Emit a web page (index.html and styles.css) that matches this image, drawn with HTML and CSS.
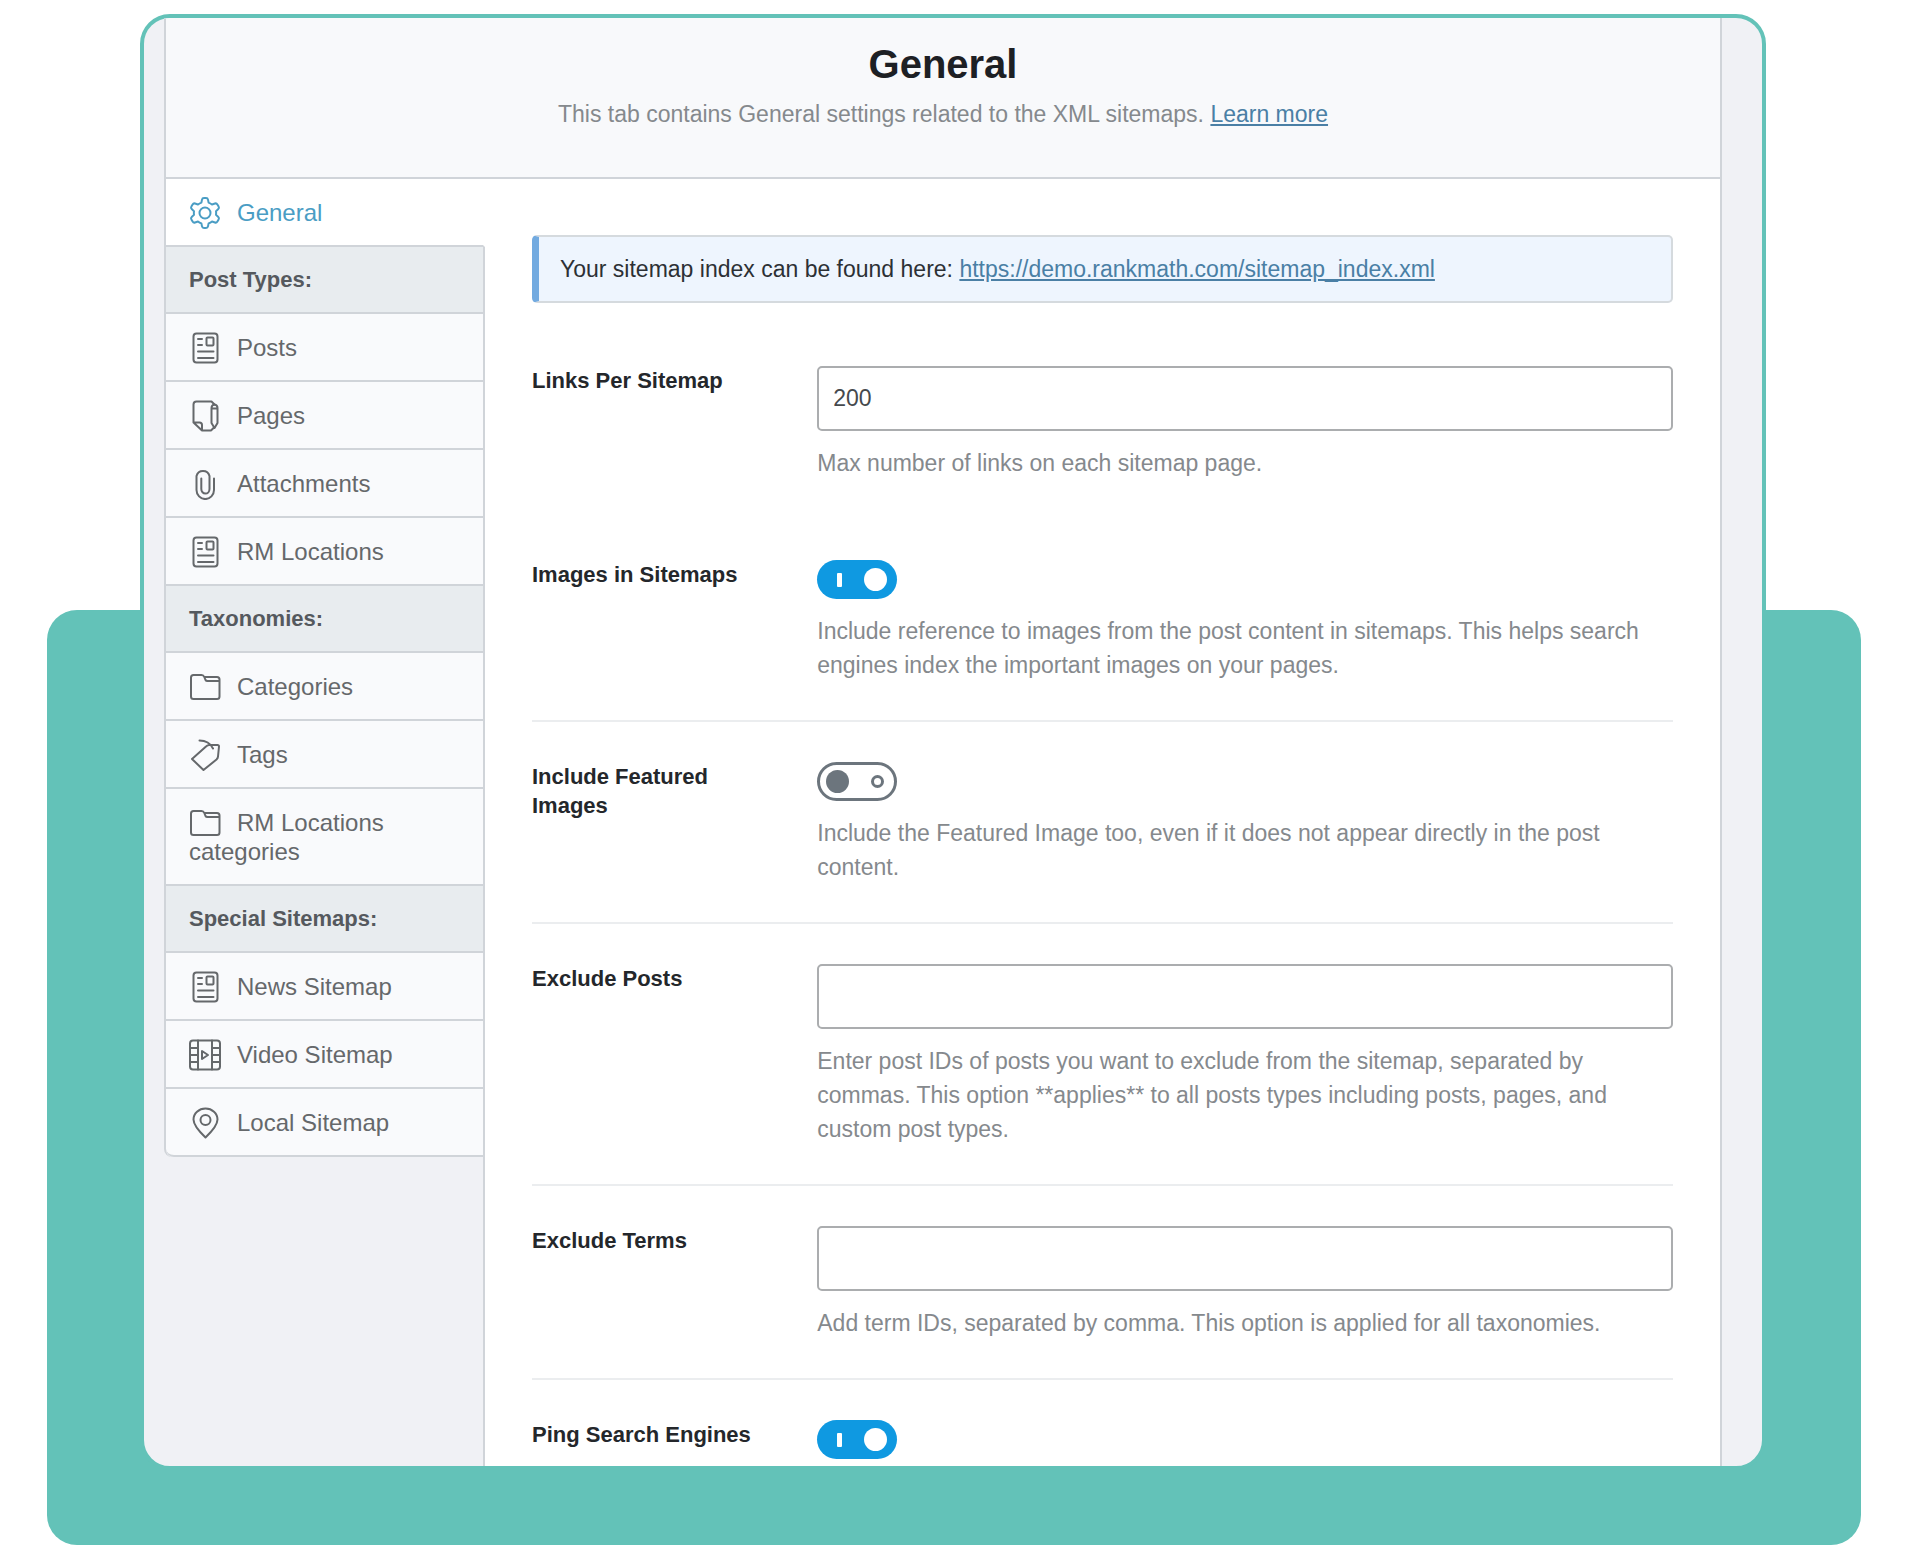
FILE: index.html
```html
<!DOCTYPE html>
<html lang="en">
<head>
<meta charset="utf-8">
<meta name="viewport" content="width=device-width, initial-scale=1">
<title>Sitemap Settings</title>
<link rel="stylesheet" href="styles.css">
</head>
<body>
<svg class="sprite" aria-hidden="true">
  <symbol id="i-gear" viewBox="0 0 32 32"><path d="M12.4 5.6 13 2.6Q13.300 1 15 1H17Q18.700 1 19 2.600L19.600 5.600Q21.500 6.300 23 7.500L26 6.500Q27.500 6 28.400 7.500L29.600 9.500Q30.500 11 29.300 12.100L27 14.200Q27.300 16 27 17.800L29.300 19.900Q30.500 21 29.600 22.500L28.400 24.500Q27.500 26 26 25.500L23 24.500Q21.500 25.700 19.600 26.400L19 29.400Q18.700 31 17 31H15Q13.300 31 13 29.400L12.400 26.400Q10.500 25.700 9 24.500L6 25.500Q4.500 26 3.600 24.500L2.400 22.500Q1.500 21 2.700 19.900L5 17.800Q4.700 16 5 14.200L2.700 12.100Q1.500 11 2.400 9.500L3.600 7.500Q4.500 6 6 6.500L9 7.500Q10.500 6.300 12.400 5.600Z"/><circle cx="16" cy="16" r="5.500"/></symbol>
  <symbol id="i-news" viewBox="0 0 32 32"><rect x="4.500" y="1.500" width="24" height="29" rx="3"/><path d="M9 7h4M9 13h4M9 19.500h15.500M9 26h15.500"/><rect x="17.500" y="5.500" width="7" height="8" rx="1"/></symbol>
  <symbol id="i-page" viewBox="0 0 32 32"><path d="M22 30.500H13L4.500 22.500V4.500Q4.500 1.500 7.500 1.500H22.500L25.500 4.500M4.500 22.500H10.500Q13 22.500 13 25V30.500M22 30.500 25.500 27"/><path d="M22.500 8Q22.500 5 25.500 4.500 28.500 5 28.500 8V23L25.500 28 22.500 23ZM22.500 8.500H28.500"/></symbol>
  <symbol id="i-clip" viewBox="0 0 32 32"><path d="M25 10.500V22A8.700 9 0 0 1 7.500 22V8A6.700 6.700 0 0 1 20.500 8V21A4 4.500 0 0 1 12.300 21V10.500"/></symbol>
  <symbol id="i-folder" viewBox="0 0 32 32"><path d="M2 6.500Q2 4 4.500 4H12.500Q14.500 4 15.300 6H28Q30.500 6 30.500 8.500V25.500Q30.500 28 28 28H4.500Q2 28 2 25.500ZM15.300 6 16.500 9Q17 10 18.500 10H30"/></symbol>
  <symbol id="i-tag" viewBox="0 0 32 32"><path d="M3 20 17 7.500Q18.500 6 20.500 6L28.500 6Q30 6 30 7.500L29 17.500Q29 19 27.500 20.500L14.500 31ZM10.500 1.500Q20 1.500 24 9.500"/></symbol>
  <symbol id="i-film" viewBox="0 0 32 32"><rect x="1" y="1.500" width="30" height="29" rx="3"/><path d="M9 1.500V30.500M23 1.500V30.500M1 9H9M1 16H9M1 23H9M23 9H31M23 16H31M23 23H31M13 12V20L19 16Z"/></symbol>
  <symbol id="i-pin" viewBox="0 0 32 32"><path d="M16.500 30.500Q4.500 19 4.500 12.500A12 11 0 0 1 28.500 12.500Q28.500 19 16.500 30.500Z"/><circle cx="16.500" cy="13" r="5"/></symbol>
</svg>

<div class="stage">
  <div class="backdrop"></div>
  <div class="card">
    <main class="panel">
      <header class="head">
        <h1 class="title">General</h1>
        <p class="lead">This tab contains General settings related to the XML sitemaps. <a class="link" href="#learn">Learn more</a></p>
      </header>
      <div class="body">
        <nav class="tabs">
          <a class="tab active" href="#general"><svg class="icon"><use href="#i-gear"/></svg>General</a>
          <h2 class="group">Post Types:</h2>
          <a class="tab" href="#posts"><svg class="icon"><use href="#i-news"/></svg>Posts</a>
          <a class="tab" href="#pages"><svg class="icon"><use href="#i-page"/></svg>Pages</a>
          <a class="tab" href="#attachments"><svg class="icon"><use href="#i-clip"/></svg>Attachments</a>
          <a class="tab" href="#locations"><svg class="icon"><use href="#i-news"/></svg>RM Locations</a>
          <h2 class="group">Taxonomies:</h2>
          <a class="tab" href="#categories"><svg class="icon"><use href="#i-folder"/></svg>Categories</a>
          <a class="tab" href="#tags"><svg class="icon"><use href="#i-tag"/></svg>Tags</a>
          <a class="tab" href="#location-categories"><svg class="icon"><use href="#i-folder"/></svg>RM Locations categories</a>
          <h2 class="group">Special Sitemaps:</h2>
          <a class="tab" href="#news"><svg class="icon"><use href="#i-news"/></svg>News Sitemap</a>
          <a class="tab" href="#video"><svg class="icon"><use href="#i-film"/></svg>Video Sitemap</a>
          <a class="tab" href="#local"><svg class="icon"><use href="#i-pin"/></svg>Local Sitemap</a>
        </nav>
        <form class="content">
          <p class="notice">Your sitemap index can be found here: <a class="link" href="#sitemap-index">https://demo.rankmath.com/sitemap_index.xml</a></p>
          <div class="field plain">
            <label class="label" for="links">Links Per Sitemap</label>
            <div class="control">
              <input class="text" id="links" type="text" value="200">
              <p class="desc">Max number of links on each sitemap page.</p>
            </div>
          </div>
          <div class="field">
            <label class="label" for="images">Images in Sitemaps</label>
            <div class="control">
              <input class="toggle" id="images" type="checkbox" checked>
              <p class="desc">Include reference to images from the post content in sitemaps. This helps search engines index the important images on your pages.</p>
            </div>
          </div>
          <div class="field">
            <label class="label" for="featured">Include Featured Images</label>
            <div class="control">
              <input class="toggle" id="featured" type="checkbox">
              <p class="desc">Include the Featured Image too, even if it does not appear directly in the post content.</p>
            </div>
          </div>
          <div class="field">
            <label class="label" for="exposts">Exclude Posts</label>
            <div class="control">
              <input class="text" id="exposts" type="text">
              <p class="desc">Enter post IDs of posts you want to exclude from the sitemap, separated by commas. This option **applies** to all posts types including posts, pages, and custom post types.</p>
            </div>
          </div>
          <div class="field">
            <label class="label" for="exterms">Exclude Terms</label>
            <div class="control">
              <input class="text" id="exterms" type="text">
              <p class="desc">Add term IDs, separated by comma. This option is applied for all taxonomies.</p>
            </div>
          </div>
          <div class="field last">
            <label class="label" for="ping">Ping Search Engines</label>
            <div class="control">
              <input class="toggle" id="ping" type="checkbox" checked>
            </div>
          </div>
        </form>
      </div>
    </main>
  </div>
</div>
</body>
</html>
```
FILE: styles.css
```css
:root {
  --teal: #63c2b8;
  --line: #d0d4d9;
  --page: #f0f1f5;
}

*,
*::before,
*::after { box-sizing: border-box; }

body {
  margin: 0;
  background: #fff;
  color: #2c3035;
  font-family: "Liberation Sans", Arial, sans-serif;
  font-size: 23px;
}

h1, h2, p { margin: 0; }

.sprite {
  display: none;
}

.stage {
  display: grid;
  padding: 14px 47px 9px;
}

.backdrop,
.card { grid-area: 1 / 1; }

.backdrop {
  margin-top: 596px;
  background: var(--teal);
  border-radius: 30px;
}

.card {
  margin: 0 95px 75px 93px;
  padding: 0 40px 0 20px;
  background: var(--page);
  border: 4px solid var(--teal);
  border-radius: 30px;
  overflow: hidden;
}

.panel { border-right: 2px solid var(--line); }

.head {
  padding: 22px 24px 46px;
  background: #f8f9fb;
  border-left: 2px solid var(--line);
  border-bottom: 2px solid var(--line);
  text-align: center;
}

.title {
  color: #1d2024;
  font-size: 40px;
  line-height: 48px;
}

.lead {
  margin-top: 9px;
  color: #85898d;
  line-height: 34px;
}

.link {
  color: #4a7fa5;
  text-decoration: underline;
}

.body {
  display: grid;
  grid-template-columns: 319px 1fr;
  align-items: start;
}

.tabs {
  position: relative;
  z-index: 1;
  margin-right: -2px;
  border-left: 2px solid var(--line);
  border-radius: 0 0 0 8px;
  overflow: hidden;
}

.tab,
.group {
  display: block;
  padding: 19px 23px 18px;
  border-right: 2px solid var(--line);
  border-bottom: 2px solid var(--line);
  line-height: 29px;
}

.tab {
  background: #f9fafc;
  color: #65686b;
  font-size: 24px;
  text-decoration: none;
}

.tab:last-child { border-bottom-left-radius: 8px; }

.tab.active {
  border-right-color: #fff;
  background: #fff;
  color: #4a9dc4;
}

.group {
  padding: 18px 23px;
  background: #e8ecef;
  color: #55595e;
  font-size: 22px;
}

.icon {
  width: 32px;
  height: 32px;
  margin: -6px 16px 0 0;
  vertical-align: middle;
  margin-bottom: -2px;
  fill: none;
  stroke: currentColor;
  stroke-width: 2;
  stroke-linecap: round;
  stroke-linejoin: round;
}

.content {
  padding: 56px 47px 7px;
  background: #fff;
  border-left: 2px solid var(--line);
}

.notice {
  margin-bottom: 23px;
  padding: 15px 21px;
  background: #eef5fe;
  border: 2px solid #d5dade;
  border-left: 7px solid #72aae0;
  border-radius: 5px;
  line-height: 34px;
}

.field {
  display: grid;
  grid-template-columns: 25% 75%;
  padding: 40px 0 38px;
  border-bottom: 2px solid #ebedef;
}

.field.plain { border-bottom-color: transparent; }

.field.last {
  padding-bottom: 0;
  border-bottom: 0;
}

.label {
  padding-right: 60px;
  color: #24272b;
  font-size: 22px;
  font-weight: bold;
  line-height: 29px;
}

.text {
  display: block;
  width: 100%;
  height: 65px;
  padding: 0 14px;
  background: #fff;
  border: 2px solid #abadaf;
  border-radius: 5px;
  color: #45494d;
  font: inherit;
}

.desc {
  margin-top: 15px;
  color: #85898d;
  line-height: 34px;
}

.toggle {
  display: flex;
  align-items: center;
  justify-content: space-between;
  width: 80px;
  height: 39px;
  margin: 0;
  padding: 0 10px 0 20px;
  appearance: none;
  background: #0f99e1;
  border-radius: 20px;
}

.toggle::before,
.toggle::after { content: ""; }

.toggle::before {
  width: 5px;
  height: 14px;
  background: #fff;
  border-radius: 1px;
}

.toggle::after {
  width: 23px;
  height: 23px;
  background: #fff;
  border-radius: 50%;
}

.toggle:not(:checked) {
  padding: 0 10px 0 6px;
  background: #fff;
  border: 3px solid #6c757d;
}

.toggle:not(:checked)::before {
  width: 23px;
  height: 23px;
  background: #6c757d;
  border-radius: 50%;
}

.toggle:not(:checked)::after {
  width: 13px;
  height: 13px;
  background: none;
  border: 3px solid #6c757d;
}
```
